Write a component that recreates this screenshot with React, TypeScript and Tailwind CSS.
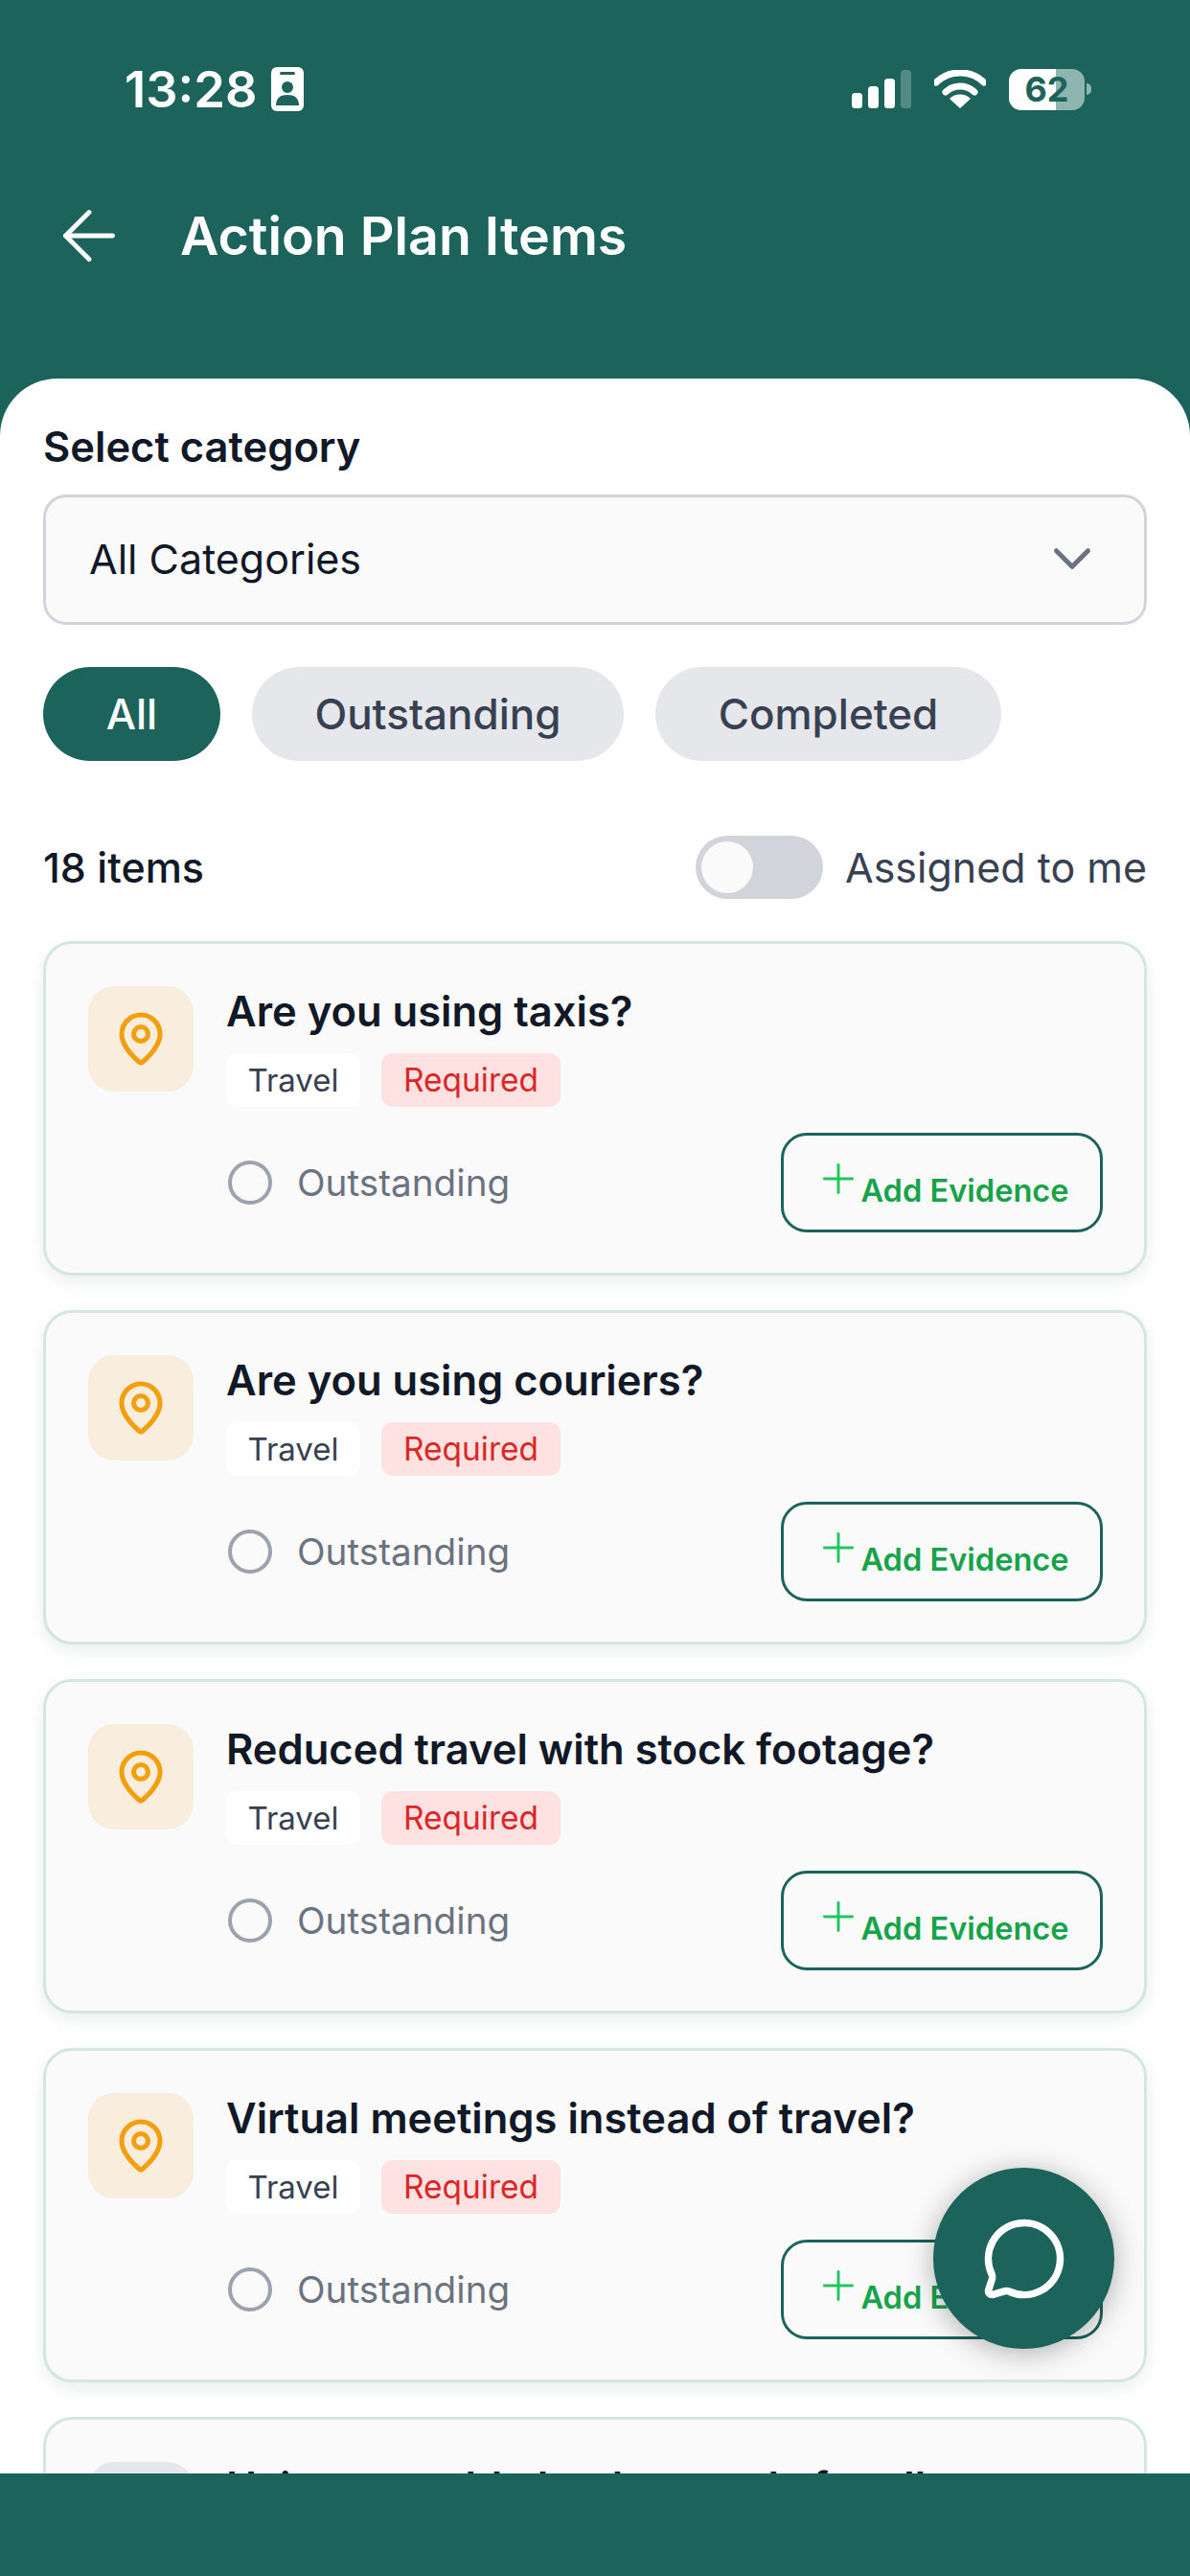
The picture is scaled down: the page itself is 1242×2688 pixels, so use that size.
import React from 'react';
import { ArrowLeft, ChevronDown, MapPin, MessageCircle, Plus } from 'lucide-react';

const items = [
  { title: 'Are you using taxis?' },
  { title: 'Are you using couriers?' },
  { title: 'Reduced travel with stock footage?' },
  { title: 'Virtual meetings instead of travel?' },
];

function ItemCard({ title }: { title: string }) {
  return (
    <div className="h-[349px] shrink-0 rounded-[30px] border-[3px] border-[#d3e6e2] bg-[#fafafa] pl-[44px] pr-[43px] pt-[44px] shadow-[0_6px_18px_rgba(27,99,91,0.1)]">
      <div className="flex">
        <div className="flex h-[110px] w-[110px] shrink-0 items-center justify-center rounded-[27px] bg-[#f9eddd]">
          <MapPin className="h-[60px] w-[60px] text-[#f59e0b]" strokeWidth={2} />
        </div>
        <div className="ml-[34px] flex-1">
          <div className="text-[43.5px] leading-[52px] font-semibold text-[#111827]">{title}</div>
          <div className="mt-[18px] flex gap-[22px]">
            <span className="flex h-[56px] w-[140px] items-center justify-center rounded-[12px] bg-white pt-[1px] text-[33px] text-[#374151]">Travel</span>
            <span className="flex h-[56px] w-[187px] items-center justify-center rounded-[12px] bg-[#fee2e2] pt-[1px] text-[33.5px] text-[#dc2626]">Required</span>
          </div>
          <div className="mt-[27px] flex items-center justify-between">
            <div className="ml-[2px] flex items-center gap-[26px]">
              <div className="h-[46px] w-[46px] rounded-full border-[4px] border-[#9ca3af]" />
              <span className="text-[38.7px] text-[#6b7280]">Outstanding</span>
            </div>
            <button className="flex h-[104px] w-[336px] items-center justify-center rounded-[27px] border-[3px] border-[#1b635b]">
              <Plus className="mb-[8px] h-[50px] w-[50px] text-[#22c55e]" strokeWidth={1.4} />
              <span className="ml-[-2px] mt-[16px] text-[32.6px] font-semibold text-[#16a34a]">Add Evidence</span>
            </button>
          </div>
        </div>
      </div>
    </div>
  );
}

export default function App() {
  return (
    <div className="relative flex h-[2688px] w-[1242px] flex-col overflow-hidden bg-[#1b635b] font-['Inter',sans-serif]">
      {/* status bar */}
      <div className="flex h-[140px] shrink-0 items-center justify-between pl-[130px] pr-[103px] pt-[46px]">
        <div className="flex items-center gap-[14px]">
          <span className="text-[52.5px] font-semibold text-white">13:28</span>
          <svg width="34" height="46" viewBox="0 0 34 46">
            <rect width="34" height="46" rx="6" fill="#fff" />
            <rect x="9" y="5" width="16" height="3" rx="1.5" fill="#1b635b" />
            <circle cx="17" cy="21" r="6" fill="#1b635b" />
            <path d="M5 40c0-8 5-11 12-11s12 3 12 11z" fill="#1b635b" />
          </svg>
        </div>
        <div className="flex items-center gap-[24px]">
          <svg width="62" height="40" viewBox="0 0 62 40">
            <rect x="0" y="24" width="11" height="16" rx="3.5" fill="#fff" />
            <rect x="17" y="17" width="11" height="23" rx="3.5" fill="#fff" />
            <rect x="34" y="9" width="11" height="31" rx="3.5" fill="#fff" />
            <rect x="51" y="0" width="11" height="40" rx="3.5" fill="#fff" fillOpacity="0.25" />
          </svg>
          <svg width="54" height="40" viewBox="0 0 54 40">
            <path d="M2 13a36 36 0 0 1 50 0" fill="none" stroke="#fff" strokeWidth="7" strokeLinecap="round" />
            <path d="M12 23a22 22 0 0 1 30 0" fill="none" stroke="#fff" strokeWidth="7" strokeLinecap="round" />
            <path d="M27 40l-11-10a16 16 0 0 1 22 0z" fill="#fff" />
          </svg>
          <div className="flex items-center gap-[2px]">
            <div className="relative flex h-[43px] w-[79px] items-center justify-center overflow-hidden rounded-[13px] bg-[#8fb5b0]">
              <div className="absolute inset-y-0 left-0 w-[49px] bg-white" />
              <span className="relative text-[36px] font-bold text-[#1b635b]">62</span>
            </div>
            <div className="h-[12px] w-[5px] rounded-r-full bg-[#8fb5b0]" />
          </div>
        </div>
      </div>

      {/* top bar */}
      <div className="flex h-[255px] shrink-0 items-start pl-[51px]">
        <ArrowLeft className="mt-[64px] h-[84px] w-[84px] text-white" strokeWidth={1.4} />
        <h1 className="ml-[53px] mt-[72px] text-[55.5px] leading-[68px] font-semibold text-white">Action Plan Items</h1>
      </div>

      {/* content */}
      <div className="flex-1 overflow-hidden rounded-t-[60px] bg-white px-[45px] pt-[45px]">
        <div className="text-[43.5px] leading-[52px] font-semibold text-[#111827]">Select category</div>
        <div className="mt-[24px] flex h-[136px] items-center justify-between rounded-[24px] border-[3px] border-[#d1d5db] bg-[#fafafa] pb-[2px] pl-[45px] pr-[42px]">
          <span className="text-[43px] text-[#111827]">All Categories</span>
          <ChevronDown className="h-[66px] w-[66px] text-[#6b7280]" strokeWidth={1.8} />
        </div>

        <div className="mt-[44px] flex gap-[33px]">
          <button className="flex h-[98px] w-[185px] items-center justify-center rounded-full bg-[#1b635b] text-[44px] font-medium text-white">All</button>
          <button className="flex h-[98px] w-[388px] items-center justify-center rounded-full bg-[#e5e7eb] text-[44px] font-medium text-[#374151]">Outstanding</button>
          <button className="flex h-[98px] w-[361px] items-center justify-center rounded-full bg-[#e5e7eb] text-[44px] font-medium text-[#374151]">Completed</button>
        </div>

        <div className="mt-[78px] flex items-center justify-between">
          <span className="text-[43px] font-medium text-[#111827]">18 items</span>
          <div className="flex items-center gap-[23px]">
            <div className="flex h-[66px] w-[133px] items-center rounded-full bg-[#d1d5db] pl-[6px]">
              <div className="h-[54px] w-[54px] rounded-full bg-[#fafafa]" />
            </div>
            <span className="text-[43px] text-[#374151]">Assigned to me</span>
          </div>
        </div>

        <div className="mt-[44px] flex flex-col gap-[36px]">
          {items.map((item) => (
            <ItemCard key={item.title} title={item.title} />
          ))}
          <div className="h-[349px] shrink-0 rounded-[30px] border-[3px] border-[#d3e6e2] bg-[#fafafa] pl-[44px] pt-[44px]">
            <div className="flex">
              <div className="h-[110px] w-[110px] shrink-0 rounded-[27px] bg-[#e5e7eb]" />
              <div className="ml-[34px] text-[43.5px] leading-[52px] font-semibold text-[#111827]">Using reusable backgrounds for all</div>
            </div>
          </div>
        </div>
      </div>

      {/* bottom bar */}
      <div className="h-[107px] shrink-0 bg-[#1b635b]" />

      {/* chat button */}
      <button className="absolute left-[974px] top-[2262px] flex h-[189px] w-[189px] items-center justify-center rounded-full bg-[#1b635b] shadow-[0_4px_30px_rgba(0,0,0,0.3)]">
        <MessageCircle className="h-[90px] w-[90px] text-white" strokeWidth={2} />
      </button>
    </div>
  );
}
